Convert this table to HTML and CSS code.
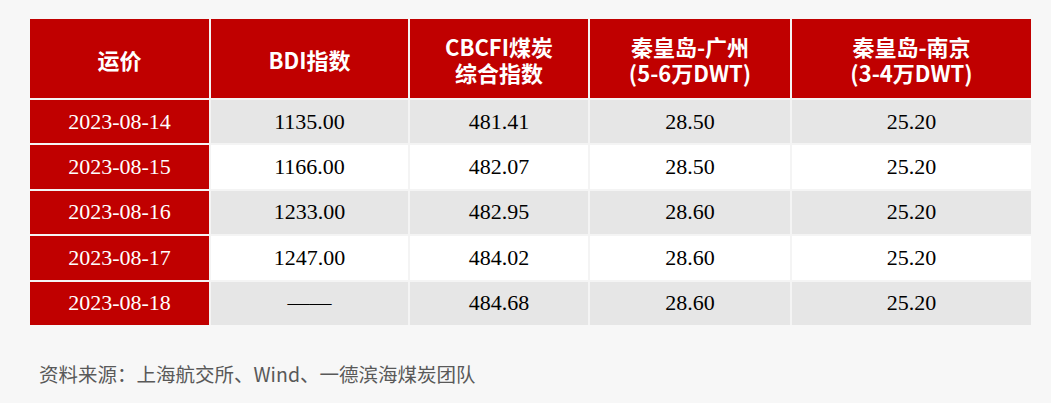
FILE: index.html
```html
<!DOCTYPE html>
<html lang="zh-CN">
<head>
<meta charset="utf-8">
<link rel="stylesheet" href="styles.css">
</head>
<body>
<div class="page">
  <table class="freight">
    <colgroup>
      <col class="c1"><col class="c2"><col class="c3"><col class="c4"><col class="c5">
    </colgroup>
    <thead>
      <tr>
        <th>运价</th>
        <th>BDI指数</th>
        <th>CBCFI煤炭<br>综合指数</th>
        <th>秦皇岛-广州<br>(5-6万DWT)</th>
        <th>秦皇岛-南京<br>(3-4万DWT)</th>
      </tr>
    </thead>
    <tbody>
      <tr class="alt"><td class="date">2023-08-14</td><td>1135.00</td><td>481.41</td><td>28.50</td><td>25.20</td></tr>
      <tr><td class="date">2023-08-15</td><td>1166.00</td><td>482.07</td><td>28.50</td><td>25.20</td></tr>
      <tr class="alt"><td class="date">2023-08-16</td><td>1233.00</td><td>482.95</td><td>28.60</td><td>25.20</td></tr>
      <tr><td class="date">2023-08-17</td><td>1247.00</td><td>484.02</td><td>28.60</td><td>25.20</td></tr>
      <tr class="alt"><td class="date">2023-08-18</td><td>——</td><td>484.68</td><td>28.60</td><td>25.20</td></tr>
    </tbody>
  </table>
  <p class="source">资料来源：上海航交所、Wind、一德滨海煤炭团队</p>
</div>
</body>
</html>
```

FILE: styles.css
```css
html, body {
  margin: 0;
  padding: 0;
  background: #f7f7f7;
}
.page {
  padding: 19px 0 0 30px;
}
.freight {
  border-collapse: collapse;
  table-layout: fixed;
  width: 1001px;
}
.c1 { width: 180px; }
.c2 { width: 199px; }
.c3 { width: 180px; }
.c4 { width: 202px; }
.c5 { width: 240px; }
.freight th,
.freight td {
  border: 2px solid #f4f4f4;
  padding: 0;
  text-align: center;
  vertical-align: middle;
}
.freight tr > :first-child { border-left: none; }
.freight tr > :last-child { border-right: none; }
.freight thead tr > * { border-top: none; }
.freight tbody tr:last-child > * { border-bottom: none; }
.freight th {
  height: 79px;
  background: #c00000;
  color: #ffffff;
  font-family: "Noto Sans CJK SC", "Noto Sans", sans-serif;
  font-weight: 700;
  font-size: 22px;
  line-height: 26px;
}
.freight td {
  height: 43.4px;
  background: #ffffff;
  color: #000000;
  font-family: "Liberation Serif", "Times New Roman", serif;
  font-size: 22px;
  line-height: 26px;
}
.freight tr.alt td {
  background: #e6e6e6;
}
.freight td.date,
.freight tr.alt td.date {
  background: #c00000;
  color: #ffffff;
}
.source {
  margin: 35px 0 0 9px;
  font-family: "Noto Sans CJK SC", "Noto Sans", sans-serif;
  font-size: 19.5px;
  line-height: 28px;
  color: #595959;
}
```
